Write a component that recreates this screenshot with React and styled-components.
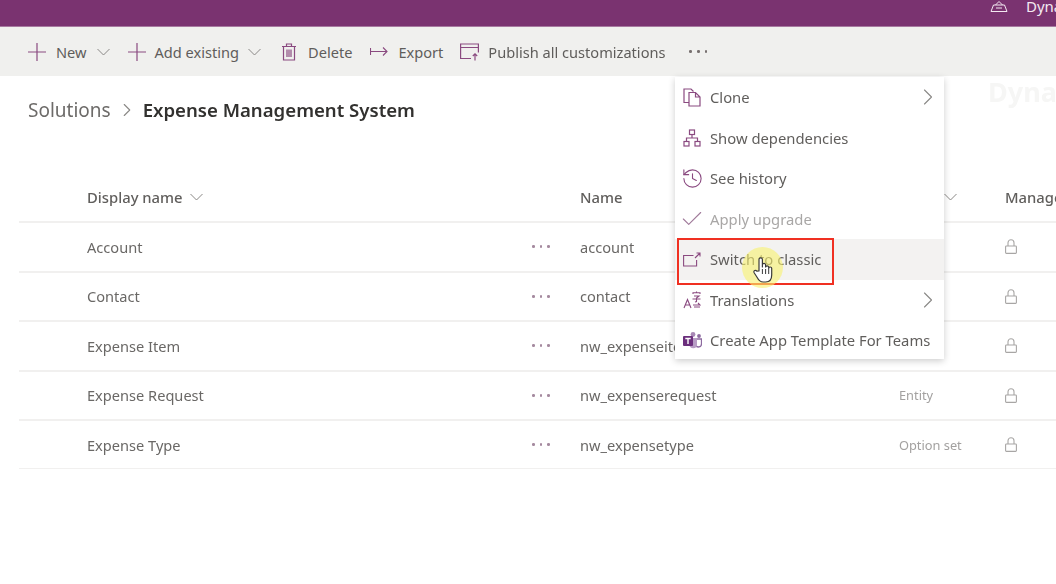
import React from 'react';
import styled, { createGlobalStyle } from 'styled-components';
import { ChevronRight, History, Check } from 'lucide-react';

const PURPLE = '#8a4a80';
const FONT = '"Noto Sans", "Open Sans", "Liberation Sans", sans-serif';

const GlobalStyle = createGlobalStyle`
  html, body {
    margin: 0;
    height: 100%;
    overflow: hidden;
    background: #fff;
  }
  #root {
    height: 100%;
  }
`;

const Page = styled.div`
  position: relative;
  width: 1056px;
  height: 584px;
  overflow: hidden;
  font-family: ${FONT};
  color: #605e5c;
  filter: blur(0.4px);
`;

const TopBar = styled.header`
  height: 27px;
  box-sizing: border-box;
  background: #7a3370;
  border-bottom: 1px solid #a77aa0;
  display: flex;
  justify-content: flex-end;
  align-items: center;
  gap: 18px;
  color: #f3e9f1;
  font-size: 15px;
  white-space: nowrap;
  padding-bottom: 14px;
`;

const Account = styled.span`
  width: 30px;
  overflow: hidden;
`;

const Toolbar = styled.nav`
  height: 49px;
  background: #f0f0ee;
  display: flex;
  align-items: center;
  padding-left: 28px;
  gap: 18px;
`;

const ToolButton = styled.div`
  display: flex;
  align-items: center;
  gap: ${p => p.$gap || 9}px;
  margin-left: ${p => p.$offset || 0}px;
  font-size: 14.6px;
  white-space: nowrap;
  color: #5f5d5b;
  svg {
    flex: none;
  }
`;

const Dots = styled.span`
  display: flex;
  gap: 5px;
  margin-left: ${p => p.$offset || 0}px;
  i {
    width: 2.6px;
    height: 2.6px;
    border-radius: 50%;
    background: ${p => p.$color || '#77706f'};
  }
`;

const Crumbs = styled.div`
  display: flex;
  align-items: center;
  height: 68px;
  padding-left: 28px;
  font-size: 19px;
  color: #6d6b69;
`;

const CrumbCurrent = styled.span`
  font-size: 18.6px;
  font-weight: 600;
  color: #32312f;
  margin-left: 5px;
  position: relative;
  top: -1px;
`;

const CrumbSeparator = styled.span`
  display: flex;
  margin-left: 5px;
`;

const Table = styled.div`
  margin: 28px 0 0 19px;
`;

const Row = styled.div`
  display: grid;
  grid-template-columns: 68px 444px 49px 319px 106px 100px;
  align-items: center;
  height: ${p => (p.$header ? 51 : p.$last ? 48 : 49.5)}px;
  box-sizing: border-box;
  border-bottom: ${p => (p.$last ? 1 : 2)}px solid #f1f0ef;
  font-size: ${p => (p.$header ? 14.8 : 14.6)}px;
  white-space: nowrap;
  color: ${p => (p.$header ? '#605e5c' : '#6a6866')};
  font-weight: ${p => (p.$header ? 500 : 400)};
`;

const NameCell = styled.div`
  grid-column: 2;
  display: flex;
  align-items: center;
  gap: 7px;
`;

const TypeCell = styled.div`
  font-size: 12.8px;
  color: #a3a1a0;
`;

const HeaderCaretCell = styled.div`
  display: flex;
  padding-left: 45px;
`;

const LockCell = styled.div`
  display: flex;
`;

const Menu = styled.div`
  position: absolute;
  left: 675px;
  top: 77px;
  width: 269px;
  height: 282px;
  box-sizing: border-box;
  background: #fff;
  box-shadow: 0 2px 7px rgba(0, 0, 0, 0.2);
  display: flex;
  flex-direction: column;
`;

const MenuItem = styled.div`
  display: flex;
  align-items: center;
  flex: none;
  height: 40.5px;
  gap: 9px;
  padding: 0 2px 0 8px;
  font-size: 14.8px;
  white-space: nowrap;
  color: ${p => (p.$disabled ? '#a9a7a6' : '#605e5c')};
  background: ${p => (p.$active ? '#f3f2f1' : 'transparent')};
`;

const MenuLabel = styled.span`
  flex: 1;
`;

const MenuArrow = styled(ChevronRight)`
  color: #8a8886;
`;

const IconSlot = styled.span`
  display: flex;
  justify-content: center;
  width: 18px;
  flex: none;
  svg {
    flex: none;
  }
`;

const Highlight = styled.div`
  position: absolute;
  left: 677px;
  top: 238px;
  width: 157px;
  height: 47px;
  box-sizing: border-box;
  border: 2px solid #f03022;
`;

const CursorHalo = styled.div`
  position: absolute;
  left: 742px;
  top: 247px;
  width: 41px;
  height: 41px;
  border-radius: 50%;
  background: rgba(248, 242, 110, 0.6);
`;

const Cursor = styled.svg`
  position: absolute;
  left: 752px;
  top: 256px;
`;

const Watermark = styled.div`
  position: absolute;
  left: 988px;
  top: 73px;
  font-size: 27px;
  font-weight: 700;
  color: #f6f6f5;
  white-space: nowrap;
`;

const thin = { strokeWidth: 1.1, absoluteStrokeWidth: true };

const PlusIcon = () => (
  <svg width="18" height="18" viewBox="0 0 18 18" fill="none" stroke={PURPLE} strokeWidth="1.2">
    <path d="M9 0v18M0 9h18" />
  </svg>
);

const Caret = () => (
  <svg width="13" height="8" viewBox="0 0 13 8" fill="none" stroke="#8a8886" strokeWidth="1">
    <path d="M.5 1l6 6 6-6" />
  </svg>
);

const TrashIcon = () => (
  <svg width="14" height="18" viewBox="0 0 14 18" fill="none" stroke={PURPLE} strokeWidth="1.2">
    <path d="M0 3.500h14M4.500 3V1h5v2M1.500 3.500V17h11V3.500M5 6.500v7.500M7 6.500v7.500M9 6.500v7.500" />
  </svg>
);

const ExportIcon = () => (
  <svg width="18" height="12" viewBox="0 0 18 12" fill="none" stroke={PURPLE} strokeWidth="1.1">
    <path d="M.5 2v7M.5 5.500h16.500M13 1.500l4 4-4 4" />
  </svg>
);

const PublishIcon = () => (
  <svg width="19" height="18" viewBox="0 0 19 18" fill="none" stroke={PURPLE} strokeWidth="1.2">
    <path d="M11 15.500H.6V1h17.800v8.500M.6 4.500h17.800M15 17.500V11M12.800 13l2.200-2.200 2.200 2.200" />
  </svg>
);

const CopyIcon = () => (
  <svg width="18" height="19" viewBox="0 0 18 19" fill="none" stroke={PURPLE} strokeWidth="1.2">
    <path d="M6 14.500H1V1h7l2.500 2.500" />
    <path d="M6 4.500h6.500L17 9v9H6zM12.500 4.500V9H17" />
  </svg>
);

const NetworkIcon = () => (
  <svg width="18" height="18" viewBox="0 0 18 18" fill="none" stroke={PURPLE} strokeWidth="1.2">
    <rect x="6.500" y="1" width="5" height="4.500" />
    <rect x="1" y="12.500" width="5" height="4.500" />
    <rect x="12" y="12.500" width="5" height="4.500" />
    <path d="M9 5.500v3.500M3.500 12.500V9h11v3.500" />
  </svg>
);

const SwitchIcon = () => (
  <svg width="18" height="15" viewBox="0 0 18 15" fill="none" stroke={PURPLE} strokeWidth="1.1">
    <path d="M10.500 3.500H.6V14h13V8M12 6l5-5M13.500 1H17v3.500" />
  </svg>
);

const TranslateIcon = () => (
  <svg width="18" height="18" viewBox="0 0 18 18" fill="none" stroke={PURPLE} strokeWidth="1.1">
    <path d="M1 17l3.500-8.500L8 17M2.300 14h4.400" />
    <path d="M10 3V1.800h7V3M13.500.5v1.300M11 5h5l-2.500 2v3.500l-1.500.5M9.500 8h8" />
    <path d="M10 14h7l-2-2M17 16h-6" />
  </svg>
);

const TeamsIcon = () => (
  <svg width="19" height="17" viewBox="0 0 19 17">
    <circle cx="10" cy="2.500" r="2.400" fill="#a888b5" />
    <circle cx="16" cy="4" r="1.900" fill="#8d6aa0" />
    <path d="M12.500 7h6v5a3 3 0 0 1-6 0z" fill="none" stroke="#8d6aa0" strokeWidth="1.3" />
    <path d="M6.500 6h7.500v6.500a3.700 3.700 0 0 1-7.500 0z" fill="#b79cc4" />
    <rect x="0" y="4" width="10" height="10" rx="1" fill="#6b2f7c" />
    <path d="M2.300 6.500h5.400M5 6.500v5.500" stroke="#fff" strokeWidth="1.4" />
  </svg>
);

const OrgIcon = () => (
  <svg width="18" height="11" viewBox="0 0 18 11" fill="none" stroke="#f3e9f1" strokeWidth="1">
    <path d="M5.500 4L9 .5 12.500 4M1 10.500L3.500 4h11l2.500 6.500z" />
    <path d="M6 7h6" />
  </svg>
);

const LockIcon = () => (
  <svg width="12" height="15" viewBox="0 0 12 15" fill="none" stroke="#a8a6a5" strokeWidth="1.1">
    <rect x=".6" y="7" width="10.800" height="7.400" rx=".8" />
    <path d="M3 7V3.800a3 3 0 0 1 6 0V7" />
  </svg>
);

const HandCursor = () => (
  <Cursor width="22" height="28" viewBox="0 0 22 28">
    <path
      d="M7 15V3.500a1.700 1.700 0 0 1 3.400 0V11V9a1.600 1.600 0 0 1 3.200 0v2a1.600 1.600 0 0 1 3.100 0v1.500a1.500 1.500 0 0 1 3 0V19c0 4-2 7-6 7h-2.500c-3 0-4.500-1.500-6-4.500L2 16.500c-.8-1.800 1.700-3 2.800-1.300z"
      fill="#fff"
      stroke="#3a3a3a"
      strokeWidth="1.2"
      strokeLinejoin="round"
    />
    <path d="M10.400 13v5M13.600 13v5M16.700 13v5" stroke="#3a3a3a" strokeWidth="1" />
  </Cursor>
);

const ThreeDots = props => (
  <Dots {...props}>
    <i />
    <i />
    <i />
  </Dots>
);

const menuItems = [
  { label: 'Clone', icon: <CopyIcon />, arrow: true },
  { label: 'Show dependencies', icon: <NetworkIcon /> },
  { label: 'See history', icon: <History size={23} color={PURPLE} {...thin} /> },
  { label: 'Apply upgrade', icon: <Check size={26} color="#a07a9a" {...thin} />, disabled: true },
  { label: 'Switch to classic', icon: <SwitchIcon />, active: true },
  { label: 'Translations', icon: <TranslateIcon />, arrow: true },
  { label: 'Create App Template For Teams', icon: <TeamsIcon /> },
];

// the type of the first three rows sits under the open menu
const rows = [
  { display: 'Account', name: 'account' },
  { display: 'Contact', name: 'contact' },
  { display: 'Expense Item', name: 'nw_expenseitem' },
  { display: 'Expense Request', name: 'nw_expenserequest', type: 'Entity' },
  { display: 'Expense Type', name: 'nw_expensetype', type: 'Option set' },
];

export default function App() {
  return (
    <Page>
      <GlobalStyle />
      <TopBar>
        <OrgIcon />
        <Account>Dynamics</Account>
      </TopBar>
      <Toolbar>
        <ToolButton $gap={10}>
          <PlusIcon />
          New
          <Caret />
        </ToolButton>
        <ToolButton>
          <PlusIcon />
          Add existing
          <Caret />
        </ToolButton>
        <ToolButton $gap={12} $offset={3}>
          <TrashIcon />
          Delete
        </ToolButton>
        <ToolButton $gap={10}>
          <ExportIcon />
          Export
        </ToolButton>
        <ToolButton $offset={-1}>
          <PublishIcon />
          Publish all customizations
        </ToolButton>
        <ThreeDots $offset={6} />
      </Toolbar>
      <Crumbs>
        Solutions
        <CrumbSeparator>
          <ChevronRight size={22} color="#8a8886" {...thin} />
        </CrumbSeparator>
        <CrumbCurrent>Expense Management System</CrumbCurrent>
      </Crumbs>
      <Table>
        <Row $header>
          <NameCell>
            Display name
            <Caret />
          </NameCell>
          <span />
          <span>Name</span>
          <HeaderCaretCell>
            <Caret />
          </HeaderCaretCell>
          <span>Managed</span>
        </Row>
        {rows.map((row, i) => (
          <Row key={row.name} $last={i === rows.length - 1}>
            <NameCell>{row.display}</NameCell>
            <ThreeDots $color="#a58a9f" $offset={1} />
            <span>{row.name}</span>
            <TypeCell>{row.type}</TypeCell>
            <LockCell>
              <LockIcon />
            </LockCell>
          </Row>
        ))}
      </Table>
      <Watermark>Dynamics</Watermark>
      <Menu>
        {menuItems.map(item => (
          <MenuItem key={item.label} $disabled={item.disabled} $active={item.active}>
            <IconSlot>{item.icon}</IconSlot>
            <MenuLabel>{item.label}</MenuLabel>
            {item.arrow && <MenuArrow size={28} {...thin} />}
          </MenuItem>
        ))}
      </Menu>
      <Highlight />
      <CursorHalo />
      <HandCursor />
    </Page>
  );
}
